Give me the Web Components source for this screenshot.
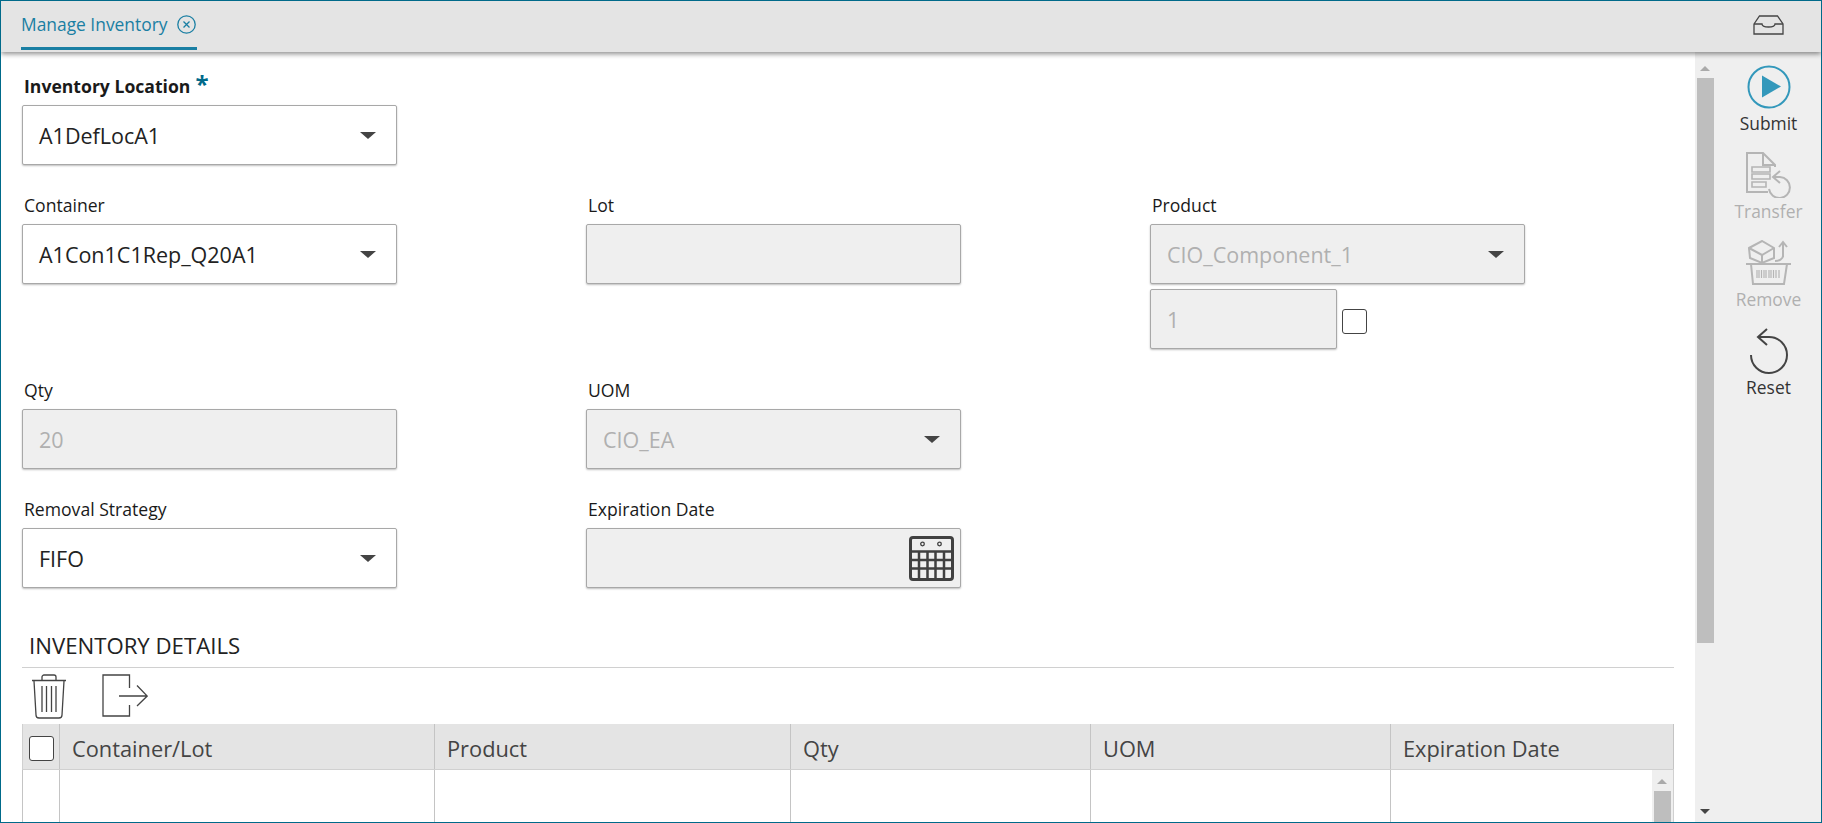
<!DOCTYPE html>
<html>
<head>
<meta charset="utf-8">
<title>Manage Inventory</title>
<style>
  html, body { margin: 0; height: 100%; overflow: hidden; }
  body { font-family: "Open Sans", "Noto Sans", sans-serif; color: #2b2b2b; }
</style>
</head>
<body>
<inv-app>
  <inv-tabbar slot="top" label="Manage Inventory"></inv-tabbar>

  <inv-field label="Inventory Location" required style="grid-column: 1 / -1">
    <inv-select value="A1DefLocA1"></inv-select>
  </inv-field>

  <inv-field label="Container"><inv-select value="A1Con1C1Rep_Q20A1"></inv-select></inv-field>
  <inv-field label="Lot"><inv-input disabled></inv-input></inv-field>
  <inv-field label="Product">
    <inv-select value="CIO_Component_1" disabled></inv-select>
    <inv-qty value="1"></inv-qty>
  </inv-field>

  <inv-field label="Qty"><inv-input value="20" disabled></inv-input></inv-field>
  <inv-field label="UOM"><inv-select value="CIO_EA" disabled></inv-select></inv-field>
  <span></span>

  <inv-field label="Removal Strategy"><inv-select value="FIFO"></inv-select></inv-field>
  <inv-field label="Expiration Date"><inv-date></inv-date></inv-field>
  <span></span>

  <inv-details slot="bottom"></inv-details>

  <inv-action slot="actions" label="Submit" kind="submit"></inv-action>
  <inv-action slot="actions" label="Transfer" kind="transfer" disabled></inv-action>
  <inv-action slot="actions" label="Remove" kind="remove" disabled></inv-action>
  <inv-action slot="actions" label="Reset" kind="reset"></inv-action>
</inv-app>

<script>
// Icons used by the rail and the tool strip
const ICONS = {
  submit: `<svg width="44" height="44" viewBox="0 0 44 44" fill="none">
      <circle cx="22" cy="22" r="20.500" stroke="#3398bb" stroke-width="2"/>
      <path d="M15 10.500 L34 21.500 L15 32.500Z" fill="#3398bb"/></svg>`,
  transfer: `<svg width="46" height="46" viewBox="0 0 46 46" fill="none" stroke="#b5b5b5" stroke-width="2">
      <path d="M22 40H1V1H17L29 13V15"/><path d="M17 1V13H29"/>
      <path d="M6 15H24V20H6ZM6 22H24V27H6ZM6 30H20V35H6Z" stroke-width="1.600"/>
      <path d="M27 25H34A10.500 10.500 0 1 1 23 37"/>
      <path d="M34 19L27 25L34 31"/></svg>`,
  remove: `<svg width="46" height="46" viewBox="0 0 46 46" fill="none" stroke="#b5b5b5" stroke-width="2">
      <path d="M3 8L16 1L28 8V18L16 23L4 18Z"/><path d="M3 8L16 15L28 8M16 15V23"/>
      <path d="M37 17V3M33 7L37 2L41 7"/><path d="M37 16C37 19 33 21 29 21"/>
      <path d="M0 24H45"/><path d="M5 24L7 44H38L41 24"/>
      <path d="M11 30V38M13 30V38M15.500 30V38M18 30V38M20 30V38M23 30V38M25 30V38M27.500 30V38M30 30V38M33 30V38" stroke-width="1.200"/></svg>`,
  reset: `<svg width="40" height="46" viewBox="0 0 40 46" fill="none" stroke="#444" stroke-width="2">
      <path d="M9 9H20A18 18 0 1 1 2 27"/>
      <path d="M18 1L9 9L18 17"/></svg>`,
  inbox: `<svg width="31" height="20" viewBox="0 0 31 20" fill="none" stroke="#444" stroke-width="1.300">
      <path d="M1 9L6.500 1H24.500L30 9V19H1Z"/><path d="M1 9H9C9 13 22 13 22 9H30"/></svg>`,
  trash: `<svg width="36" height="45" viewBox="0 0 36 45" fill="none" stroke="#444" stroke-width="1.300">
      <path d="M1 6.500H35"/><path d="M11 6V3C11 2 12 1 13 1H23C24 1 25 2 25 3V6"/>
      <path d="M3 7L5 41C5 43 6 44 8 44H28C30 44 31 43 31 41L33 7"/>
      <path d="M11 12V38M15.500 12V38M20.500 12V38M25 12V38"/></svg>`,
  exit: `<svg width="46" height="43" viewBox="0 0 46 43" fill="none" stroke="#444" stroke-width="1.300">
      <path d="M27.500 14V1H1V42H27.500V31"/><path d="M17 22H45M35 11.500L45.200 22L35 32"/></svg>`,
  calendar: `<svg width="45" height="45" viewBox="0 0 45 45" fill="none" stroke="#404040">
      <rect x="1.500" y="1.500" width="42" height="42" rx="2.500" stroke-width="3"/>
      <path d="M2 15.500H43M2 24H43M2 32.500H43" stroke-width="2.500"/>
      <path d="M10 15V43M18.500 15V43M26.500 15V43M35 15V43" stroke-width="2.500"/>
      <circle cx="13.500" cy="8" r="1.800" stroke-width="1.300"/><circle cx="30.500" cy="8" r="1.800" stroke-width="1.300"/></svg>`
};

const CONTROL_CSS = `
  .box { box-sizing: border-box; height: 60px; display: flex; align-items: center;
    padding: 0 16px; border: 1px solid #a8a8a8; border-radius: 2px; background: #fff;
    box-shadow: 0 1px 2px rgba(0,0,0,.25); font-size: 21.500px; color: #222; }
  .box.off { background: #efefef; color: #b0b0b0; }
  .val { flex: 1; white-space: nowrap; }
  .arrow { width: 0; height: 0; border: 8px solid transparent; border-top: 7px solid #444;
    border-bottom: 0; margin-right: 4px; }
`;

class InvApp extends HTMLElement {
  constructor() {
    super();
    this.attachShadow({mode: 'open'}).innerHTML = `
      <style>
        :host { display: flex; flex-direction: column; box-sizing: border-box; height: 823px;
          border: 1px solid #006a8a; overflow: hidden; background: #fff; }
        .body { flex: 1; display: flex; min-height: 0; }
        .main { flex: 1; min-width: 0; box-sizing: border-box; padding: 23px 21px 0 21px; overflow: hidden; }
        .form { display: grid; grid-template-columns: 564px 564px 1fr; row-gap: 29px; width: 100%; }
        .rail { width: 105px; flex: none; background: #efefef; display: flex; flex-direction: column;
          align-items: center; padding-top: 12px; box-sizing: border-box; }
      </style>
      <slot name="top"></slot>
      <div class="body">
        <div class="main">
          <div class="form"><slot></slot></div>
          <slot name="bottom"></slot>
        </div>
        <inv-scrollbar arrow-top="14" thumb-top="26" thumb-height="565" down></inv-scrollbar>
        <div class="rail"><slot name="actions"></slot></div>
      </div>`;
  }
}

class InvTabbar extends HTMLElement {
  constructor() {
    super();
    this.attachShadow({mode: 'open'}).innerHTML = `
      <style>
        :host { display: flex; justify-content: space-between; align-items: stretch; height: 51px; flex: none;
          background: #e4e4e4; box-shadow: 0 2px 5px rgba(0,0,0,.45); position: relative; z-index: 1;
          padding: 0 37px 0 20px; }
        .tab { display: flex; align-items: center; gap: 10px; height: 49px; box-sizing: border-box;
          border-bottom: 3px solid #1a7fa3; color: #1a7fa3; font-size: 17.400px; padding-right: 1px; }
        .end { display: flex; align-items: center; padding-bottom: 3px; }
        svg { display: block; }
      </style>
      <div class="tab">
        <span>${this.getAttribute('label')}</span>
        <svg width="19" height="19" viewBox="0 0 19 19" fill="none" stroke="#1a7fa3" stroke-width="1.300">
          <circle cx="9.500" cy="9.500" r="8.700"/><path d="M6.500 6.500L12.500 12.500M12.500 6.500L6.500 12.500"/>
        </svg>
      </div>
      <div class="end">${ICONS.inbox}</div>`;
  }
}

class InvField extends HTMLElement {
  constructor() {
    super();
    const star = this.hasAttribute('required') ? '<span class="req">*</span>' : '';
    const bold = this.hasAttribute('required') ? ' class="strong"' : '';
    this.attachShadow({mode: 'open'}).innerHTML = `
      <style>
        :host { display: block; }
        label { display: block; height: 22px; line-height: 22px; margin: 0 0 8px 2px; font-size: 17.600px;
          font-weight: 500; color: #1a1a1a; white-space: nowrap; }
        .strong { font-weight: 700; }
        .req { color: #006a8a; font-size: 24px; font-weight: 700; line-height: 10px; margin-left: 5px; vertical-align: 0; }
      </style>
      <label${bold}>${this.getAttribute('label')}${star}</label>
      <slot></slot>`;
  }
}

class InvSelect extends HTMLElement {
  constructor() {
    super();
    const off = this.hasAttribute('disabled') ? ' off' : '';
    this.attachShadow({mode: 'open'}).innerHTML = `
      <style>:host { display: block; width: 375px; } ${CONTROL_CSS}</style>
      <div class="box${off}"><span class="val">${this.getAttribute('value') || ''}</span><span class="arrow"></span></div>`;
  }
}

class InvInput extends HTMLElement {
  constructor() {
    super();
    const off = this.hasAttribute('disabled') ? ' off' : '';
    this.attachShadow({mode: 'open'}).innerHTML = `
      <style>:host { display: block; width: 375px; } ${CONTROL_CSS}</style>
      <div class="box${off}"><span class="val">${this.getAttribute('value') || ''}</span></div>`;
  }
}

class InvDate extends HTMLElement {
  constructor() {
    super();
    this.attachShadow({mode: 'open'}).innerHTML = `
      <style>:host { display: block; width: 375px; } ${CONTROL_CSS}
        .box { padding-right: 6px; } svg { display: block; }</style>
      <div class="box off"><span class="val"></span>${ICONS.calendar}</div>`;
  }
}

class InvCheck extends HTMLElement {
  constructor() {
    super();
    this.attachShadow({mode: 'open'}).innerHTML = `
      <style>:host { display: block; box-sizing: border-box; width: 25px; height: 25px; flex: none;
        border: 1px solid #444; border-radius: 3px; background: #fff; }</style>`;
  }
}

class InvQty extends HTMLElement {
  constructor() {
    super();
    this.attachShadow({mode: 'open'}).innerHTML = `
      <style>:host { display: flex; align-items: center; gap: 5px; margin: 5px 0 1px; } ${CONTROL_CSS}
        .box { width: 187px; }
        inv-check { margin-top: 4px; }</style>
      <div class="box off"><span class="val">${this.getAttribute('value')}</span></div>
      <inv-check></inv-check>`;
  }
}

class InvDetails extends HTMLElement {
  constructor() {
    super();
    this.attachShadow({mode: 'open'}).innerHTML = `
      <style>
        :host { display: block; margin-top: 44px; }
        h2 { margin: 0 0 0 7px; font-size: 22.200px; font-weight: 400; line-height: 27px; color: #222; }
        .tools { border-top: 1px solid #d0d0d0; margin-top: 8px; height: 57px; display: flex; gap: 35px;
          align-items: flex-start; padding: 6px 0 0 9px; box-sizing: border-box; }
        .tools svg { display: block; }
      </style>
      <h2>INVENTORY DETAILS</h2>
      <div class="tools">${ICONS.trash}${ICONS.exit}</div>
      <inv-grid></inv-grid>`;
  }
}

class InvGrid extends HTMLElement {
  constructor() {
    super();
    const cols = ['Container/Lot', 'Product', 'Qty', 'UOM', 'Expiration Date'];
    this.attachShadow({mode: 'open'}).innerHTML = `
      <style>
        :host { display: block; }
        .row { display: grid; grid-template-columns: 37px 375px 356px 300px 300px 1fr; }
        .head { height: 46px; background: #e4e4e4; border-bottom: 1px solid #d0d0d0; box-sizing: border-box; }
        .head > div { display: flex; align-items: center; padding: 3px 0 0 12px; font-size: 21.800px; color: #444;
          border-right: 1px solid #c4c4c4; box-sizing: border-box; }
        .head > div:first-child { padding-left: 6px; }
        .head { border-left: 1px solid #d0d0d0; }
        .rows { height: 60px; position: relative; border-left: 1px solid #c4c4c4; border-right: 1px solid #d0d0d0; }
        .rows > div { border-right: 1px solid #c4c4c4; box-sizing: border-box; }
        .rows > div:last-child { border-right: 0; }
        inv-scrollbar { position: absolute; right: 0; top: 0; height: 100px; }
      </style>
      <div class="row head">
        <div><inv-check></inv-check></div>
        ${cols.map(c => `<div>${c}</div>`).join('')}
      </div>
      <div class="row rows">
        <div></div><div></div><div></div><div></div><div></div><div></div>
        <inv-scrollbar arrow-top="9" thumb-top="21" thumb-height="80"></inv-scrollbar>
      </div>`;
  }
}

// Scrollbar drawn by hand, the page itself does not scroll
class InvScrollbar extends HTMLElement {
  constructor() {
    super();
    const arrow = this.getAttribute('arrow-top');
    const top = this.getAttribute('thumb-top');
    const h = this.getAttribute('thumb-height');
    const down = this.hasAttribute('down') ? '<i class="dn"></i>' : '';
    this.attachShadow({mode: 'open'}).innerHTML = `
      <style>
        :host { display: flex; flex-direction: column; align-items: center; width: 21px; flex: none;
          background: #efefef; box-sizing: border-box; position: relative; }
        .up { position: absolute; top: ${arrow}px; left: 5px; width: 0; height: 0; border: 5px solid transparent;
          border-bottom: 5px solid #aaa; border-top: 0; }
        .thumb { margin-top: ${top}px; height: ${h}px; width: 17px; background: #bebebe; }
        .dn { position: absolute; bottom: 8px; left: 5px; width: 0; height: 0; border: 5px solid transparent;
          border-top: 5px solid #444; border-bottom: 0; }
      </style>
      <i class="up"></i><div class="thumb"></div>${down}`;
  }
}

class InvAction extends HTMLElement {
  constructor() {
    super();
    const off = this.hasAttribute('disabled');
    this.attachShadow({mode: 'open'}).innerHTML = `
      <style>
        :host { display: flex; flex-direction: column; align-items: center; height: 88px; width: 100%; }
        .ic { height: 46px; display: flex; align-items: center; justify-content: center; }
        svg { display: block; }
        span { font-size: 17.400px; line-height: 22px; margin-top: 2px; color: ${off ? '#b0b0b0' : '#333'}; }
      </style>
      <div class="ic">${ICONS[this.getAttribute('kind')]}</div>
      <span>${this.getAttribute('label')}</span>`;
  }
}

customElements.define('inv-scrollbar', InvScrollbar);
customElements.define('inv-check', InvCheck);
customElements.define('inv-select', InvSelect);
customElements.define('inv-input', InvInput);
customElements.define('inv-date', InvDate);
customElements.define('inv-qty', InvQty);
customElements.define('inv-field', InvField);
customElements.define('inv-grid', InvGrid);
customElements.define('inv-details', InvDetails);
customElements.define('inv-tabbar', InvTabbar);
customElements.define('inv-action', InvAction);
customElements.define('inv-app', InvApp);
</script>
</body>
</html>
